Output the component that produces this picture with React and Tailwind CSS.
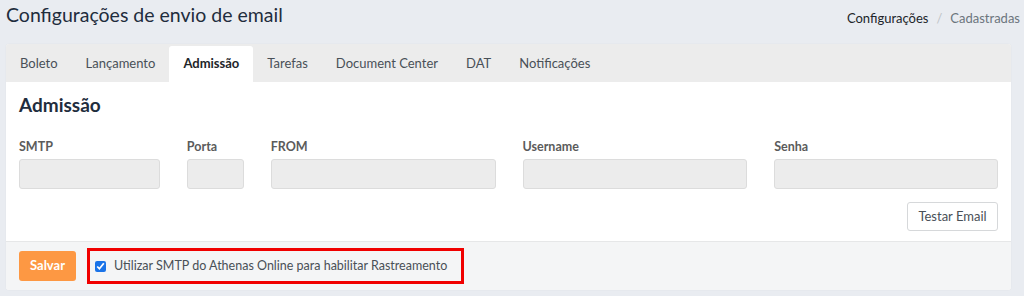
import React, { useState } from "react";

const tabs = ["Boleto", "Lançamento", "Admissão", "Tarefas", "Document Center", "DAT", "Notificações"];

const fields = [
  { label: "SMTP", width: "w-[141px]" },
  { label: "Porta", width: "w-[57px]" },
  { label: "FROM", width: "w-[225px]" },
  { label: "Username", width: "w-[225px]" },
  { label: "Senha", width: "w-[224px]" },
];

const App = () => {
  const [active, setActive] = useState("Admissão");
  const [tracking, setTracking] = useState(true);

  return (
    <div
      className="h-[296px] w-[1024px] overflow-hidden bg-[#e9ecf1] text-[#212529]"
      style={{ fontFamily: "Lato, 'Open Sans', sans-serif" }}
    >
      <div className="flex items-center justify-between pl-[6px] pr-[4px] h-[44px]">
        <h1 className="text-[19.5px] font-normal text-[#1f2d3d] leading-none pb-[14px]">
          Configurações de envio de email
        </h1>
        <div className="flex items-center text-[13px] pb-[6px]">
          <span className="text-[#212529]">Configurações</span>
          <span className="px-[8px] text-[#c0c4c8]">/</span>
          <span className="text-[#6c757d]">Cadastradas</span>
        </div>
      </div>

      <div className="ml-[6px] w-[1005px] rounded-[3px] bg-white shadow-[0_0_1px_rgba(0,0,0,0.12)]">
        <div className="flex h-[38px] items-end rounded-t-[3px] bg-[#ececec]">
          {tabs.map((tab) => (
            <button
              key={tab}
              onClick={() => setActive(tab)}
              className={
                active === tab
                  ? "h-[36px] rounded-t-[3px] bg-white px-[14px] text-[13px] font-bold text-[#212529]"
                  : "h-[36px] px-[14px] text-[13px] text-[#495057]"
              }
            >
              {tab}
            </button>
          ))}
        </div>

        <div className="px-[13px] pt-[9px] pb-[10px]">
          <h2 className="text-[19px] font-bold text-[#1f2d3d] leading-[28px]">Admissão</h2>
          <div className="mt-[20px] flex gap-[27px]">
            {fields.map((f) => (
              <div key={f.label} className={f.width}>
                <label className="block text-[12.5px] font-bold text-[#5b5b5b] leading-[16px]">
                  {f.label}
                </label>
                <input
                  type="text"
                  className="mt-[4px] h-[30px] w-full rounded-[3px] border border-[#dcdcdc] bg-[#ececec]"
                />
              </div>
            ))}
          </div>
          <div className="mt-[13px] flex justify-end">
            <button className="h-[29px] w-[91px] rounded-[3px] border border-[#d6d8da] bg-white text-[13px] text-[#495057]">
              Testar Email
            </button>
          </div>
        </div>

        <div className="flex h-[49px] items-center gap-[12px] rounded-b-[3px] border-t border-[#e6e7e8] bg-[#f4f5f6] px-[13px]">
          <button className="h-[30px] w-[57px] rounded-[3px] bg-[#fd9843] text-[13px] font-bold text-white">
            Salvar
          </button>
          <label className="-ml-[1px] flex h-[36px] w-[377px] items-center gap-[8px] whitespace-nowrap border-[3px] border-[#f00000] pl-[5px] text-[12.5px] text-[#495057]">
            <input
              type="checkbox"
              checked={tracking}
              onChange={() => setTracking(!tracking)}
              className="h-[11px] w-[11px] shrink-0 accent-[#1a73e8]"
            />
            Utilizar SMTP do Athenas Online para habilitar Rastreamento
          </label>
        </div>
      </div>
    </div>
  );
};

export default App;
